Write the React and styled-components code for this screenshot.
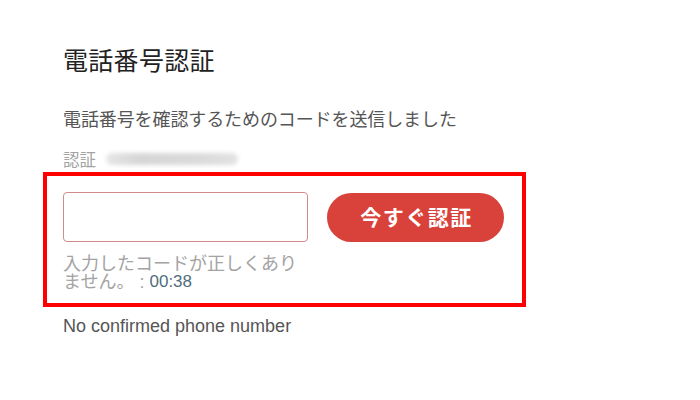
import React from "react";
import styled, { createGlobalStyle } from "styled-components";

const Global = createGlobalStyle`
  html, body { margin: 0; padding: 0; background: #ffffff; }
  body { font-family: "Liberation Sans", "Noto Sans CJK JP", sans-serif; }
  * { box-sizing: border-box; }
`;

const Page = styled.div`
  width: 700px;
  height: 400px;
  padding: 41px 0 0 63px;
  display: flex;
  flex-direction: column;
  align-items: flex-start;
  background: #fff;
`;

const Title = styled.h1`
  margin: 0;
  font-family: "Noto Sans CJK JP", sans-serif;
  font-weight: 400;
  font-size: 25px;
  line-height: 36px;
  letter-spacing: 0.3px;
  color: #222;
`;

const Lead = styled.p`
  margin: 28px 0 0;
  font-family: "Noto Sans CJK JP", sans-serif;
  font-size: 18px;
  line-height: 26px;
  color: #555;
  letter-spacing: -0.1px;
`;

const SentRow = styled.div`
  margin-top: 16px;
  display: flex;
  align-items: center;
  gap: 10px;
  height: 24px;
`;

const SentLabel = styled.span`
  font-family: "Noto Sans CJK JP", sans-serif;
  font-size: 16.5px;
  line-height: 24px;
  color: #a3a3a3;
`;

const Masked = styled.span`
  display: inline-block;
  width: 132px;
  height: 12px;
  border-radius: 6px;
  background: linear-gradient(90deg, #e6e6e6 0%, #d6d6d6 25%, #dadada 70%, #e2e2e2 100%);
  filter: blur(2px);
`;

const Highlight = styled.section`
  margin: 1px 0 0 -20px;
  width: 483px;
  border: 4px solid #ff0000;
  padding: 16px 17px 12px 16px;
  display: flex;
  flex-direction: column;
`;

const FormRow = styled.div`
  display: flex;
  align-items: center;
  gap: 19px;
`;

const CodeInput = styled.input`
  width: 245px;
  height: 50px;
  border: 1px solid #d28a8a;
  border-radius: 4px;
  background: #fff;
  padding: 0 10px;
  font-size: 18px;
  outline: none;
`;

const VerifyButton = styled.button`
  width: 177px;
  height: 49px;
  border: none;
  border-radius: 25px;
  background: #d9423a;
  color: #fff;
  font-family: "Noto Sans CJK JP", sans-serif;
  font-weight: 700;
  font-size: 21px;
  letter-spacing: 1.5px;
  cursor: pointer;
  display: flex;
  align-items: center;
  justify-content: center;
  padding: 0 0 2px 2px;
`;

const ErrorText = styled.p`
  margin: 13px 0 0;
  width: 245px;
  font-family: "Liberation Sans", "Noto Sans CJK JP", sans-serif;
  font-size: 18px;
  line-height: 18px;
  color: #a3a3a3;
`;

const Timer = styled.span`
  display: inline-block;
  line-height: 18px;
  height: 18px;
  vertical-align: top;
  color: #4f6d80;
  font-size: 17px;
`;

const Footnote = styled.p`
  margin: 8px 0 0;
  font-family: "Liberation Sans", sans-serif;
  font-size: 18px;
  line-height: 22px;
  color: #555;
`;

export default function App() {
  return (
    <>
      <Global />
      <Page>
        <Title>電話番号認証</Title>
        <Lead>電話番号を確認するためのコードを送信しました</Lead>
        <SentRow>
          <SentLabel>認証</SentLabel>
          <Masked aria-label="hidden phone number" />
        </SentRow>
        <Highlight>
          <FormRow>
            <CodeInput type="text" />
            <VerifyButton>今すぐ認証</VerifyButton>
          </FormRow>
          <ErrorText>
            入力したコードが正しくありません。 : <Timer>00:38</Timer>
          </ErrorText>
        </Highlight>
        <Footnote>No confirmed phone number</Footnote>
      </Page>
    </>
  );
}
